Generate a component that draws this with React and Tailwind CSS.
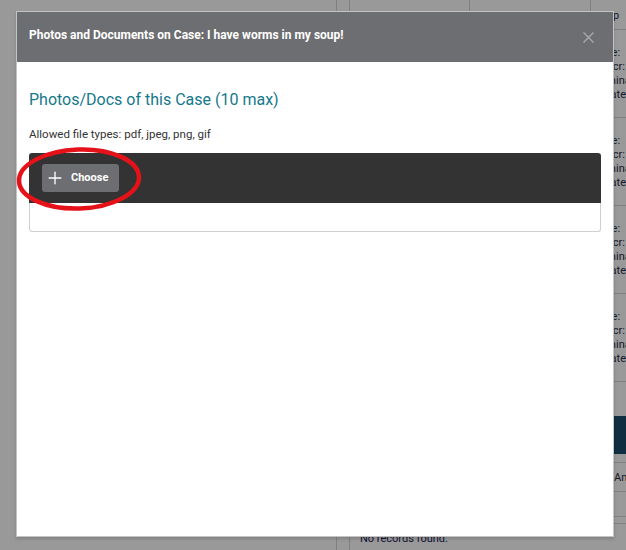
import { Plus } from "lucide-react";

const font = { fontFamily: "Roboto, 'Liberation Sans', sans-serif" };

const CaseBlock = () => (
  <div className="border-b border-[#d6d6d6] pt-[16px] pb-[15px] text-[11px] leading-[14px] text-[#2d2d44]">
    <div className="grid grid-cols-[120px_121px_1fr]">
      <div />
      <div />
      <div className="pl-[3px] whitespace-nowrap">
        <div>Type:</div>
        <div>Descr:</div>
        <div>Seminar:</div>
        <div>Created:</div>
      </div>
    </div>
  </div>
);

const BackgroundPage = () => (
  <div className="flex h-full bg-white">
    <div className="w-[337px] shrink-0 border-r border-[#d6d6d6]" />
    <div className="w-[13px] shrink-0 border-r border-[#d6d6d6]" />
    <div className="flex-1 min-w-0 flex flex-col">
      <div className="grid grid-cols-[120px_121px_1fr] h-[30px] border-b border-[#d6d6d6]">
        <div className="border-r border-[#d6d6d6]" />
        <div className="border-r border-[#d6d6d6]" />
        <div className="pl-[22px] pt-[8px] text-[11px] text-[#2d2d44]">p</div>
      </div>
      <CaseBlock />
      <CaseBlock />
      <CaseBlock />
      <CaseBlock />
      <div className="h-[34px] shrink-0" />
      <div className="ml-[10px] h-[38px] shrink-0 bg-[#1a4e69]" />
      <div className="h-[9px] shrink-0 border-b border-[#d6d6d6]" />
      <div className="h-[29px] shrink-0 border-b border-[#d6d6d6] pl-[264px] text-[11px] leading-[29px] text-[#2d2d44] whitespace-nowrap">Amount</div>
      <div className="h-[25px] shrink-0 border-b border-[#d6d6d6]" />
      <div className="h-[7px] shrink-0 border-b border-[#d6d6d6]" />
      <div className="pl-[10px] pt-[8px] text-[11px] leading-[13px] text-[#1f1f5a] whitespace-nowrap">No records found.</div>
    </div>
  </div>
);

export default function App() {
  return (
    <div className="relative h-[550px] w-full overflow-hidden" style={font}>
      <BackgroundPage />
      <div className="absolute inset-0 bg-black/40" />

      <div className="absolute left-[16px] top-[11px] w-[598px] h-[526px] bg-white border border-[#c4c4c4] shadow-[0_2px_3px_rgba(0,0,0,0.15)] flex flex-col">
        <div className="h-[50px] shrink-0 bg-[#6d6e71] flex items-center justify-between pl-[12px] pr-[19px] pb-[5px]">
          <span className="text-white text-[12px] font-bold">
            Photos and Documents on Case: I have worms in my soup!
          </span>
          <svg width="11" height="11" viewBox="0 0 11 11" className="mt-[5px]">
            <path d="M0.5 0.5 L10.5 10.5 M10.5 0.5 L0.5 10.5" stroke="#a9aaad" strokeWidth="1.4" />
          </svg>
        </div>

        <div className="px-[12px] pt-[26px]">
          <h2 className="text-[16px] leading-[24px] text-[#15788c]">Photos/Docs of this Case (10 max)</h2>
          <p className="mt-[14px] text-[11.5px] leading-[16px] text-[#333]">Allowed file types: pdf, jpeg, png, gif</p>

          <div className="relative mt-[11px]">
            <div className="h-[50px] bg-[#333333] rounded-t-[3px] flex items-center px-[13px]">
              <button className="h-[28px] w-[77px] bg-[#6d6e71] rounded-[3px] flex items-center pl-[3px] gap-[6px] text-white">
                <Plus size={20} strokeWidth={1.6} />
                <span className="text-[11px] font-bold">Choose</span>
              </button>
            </div>
            <div className="h-[29px] border border-t-0 border-[#cfcfcf] rounded-b-[3px]" />

            <svg
              className="absolute left-[-13px] top-[-7px] pointer-events-none"
              width="130"
              height="68"
              viewBox="0 0 130 68"
            >
              <ellipse cx="63" cy="33" rx="60" ry="29.5" fill="none" stroke="#e5121a" strokeWidth="4.5" transform="rotate(-2 63 33)" />
            </svg>
          </div>
        </div>
      </div>
    </div>
  );
}
